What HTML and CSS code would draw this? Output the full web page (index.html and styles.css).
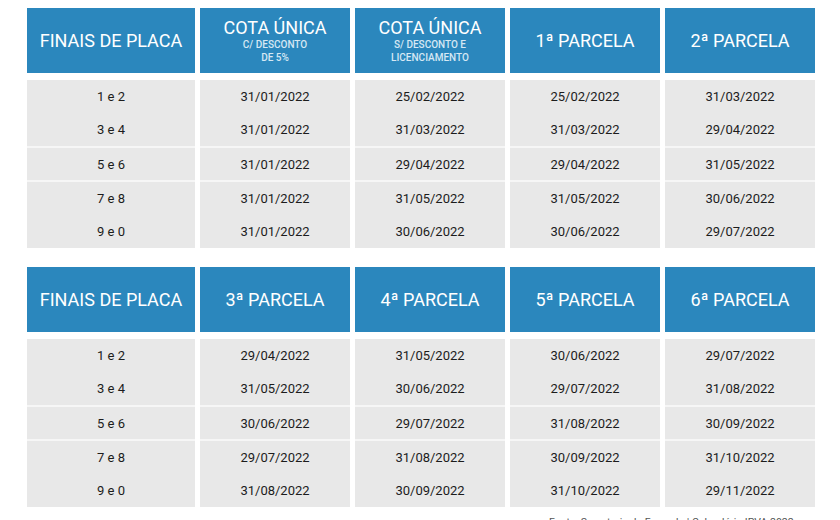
FILE: index.html
```html
<!DOCTYPE html>
<html lang="pt-BR">
<head>
<meta charset="utf-8">
<link rel="stylesheet" href="styles.css">
</head>
<body>
<div class="page">
  <div class="table">
    <div class="col first">
      <div class="head"><div class="title">FINAIS DE PLACA</div></div>
      <div class="body">
        <div class="cell">1 e 2</div><div class="cell">3 e 4</div><div class="cell mid">5 e 6</div><div class="cell">7 e 8</div><div class="cell">9 e 0</div>
      </div>
    </div>
    <div class="col">
      <div class="head"><div class="title">COTA ÚNICA</div><div class="sub">C/ DESCONTO<br>DE 5%</div></div>
      <div class="body">
        <div class="cell">31/01/2022</div><div class="cell">31/01/2022</div><div class="cell mid">31/01/2022</div><div class="cell">31/01/2022</div><div class="cell">31/01/2022</div>
      </div>
    </div>
    <div class="col">
      <div class="head"><div class="title">COTA ÚNICA</div><div class="sub">S/ DESCONTO E<br>LICENCIAMENTO</div></div>
      <div class="body">
        <div class="cell">25/02/2022</div><div class="cell">31/03/2022</div><div class="cell mid">29/04/2022</div><div class="cell">31/05/2022</div><div class="cell">30/06/2022</div>
      </div>
    </div>
    <div class="col">
      <div class="head"><div class="title">1ª PARCELA</div></div>
      <div class="body">
        <div class="cell">25/02/2022</div><div class="cell">31/03/2022</div><div class="cell mid">29/04/2022</div><div class="cell">31/05/2022</div><div class="cell">30/06/2022</div>
      </div>
    </div>
    <div class="col">
      <div class="head"><div class="title">2ª PARCELA</div></div>
      <div class="body">
        <div class="cell">31/03/2022</div><div class="cell">29/04/2022</div><div class="cell mid">31/05/2022</div><div class="cell">30/06/2022</div><div class="cell">29/07/2022</div>
      </div>
    </div>
  </div>

  <div class="table">
    <div class="col first">
      <div class="head"><div class="title">FINAIS DE PLACA</div></div>
      <div class="body">
        <div class="cell">1 e 2</div><div class="cell">3 e 4</div><div class="cell mid">5 e 6</div><div class="cell">7 e 8</div><div class="cell">9 e 0</div>
      </div>
    </div>
    <div class="col">
      <div class="head"><div class="title">3ª PARCELA</div></div>
      <div class="body">
        <div class="cell">29/04/2022</div><div class="cell">31/05/2022</div><div class="cell mid">30/06/2022</div><div class="cell">29/07/2022</div><div class="cell">31/08/2022</div>
      </div>
    </div>
    <div class="col">
      <div class="head"><div class="title">4ª PARCELA</div></div>
      <div class="body">
        <div class="cell">31/05/2022</div><div class="cell">30/06/2022</div><div class="cell mid">29/07/2022</div><div class="cell">31/08/2022</div><div class="cell">30/09/2022</div>
      </div>
    </div>
    <div class="col">
      <div class="head"><div class="title">5ª PARCELA</div></div>
      <div class="body">
        <div class="cell">30/06/2022</div><div class="cell">29/07/2022</div><div class="cell mid">31/08/2022</div><div class="cell">30/09/2022</div><div class="cell">31/10/2022</div>
      </div>
    </div>
    <div class="col">
      <div class="head"><div class="title">6ª PARCELA</div></div>
      <div class="body">
        <div class="cell">29/07/2022</div><div class="cell">31/08/2022</div><div class="cell mid">30/09/2022</div><div class="cell">31/10/2022</div><div class="cell">29/11/2022</div>
      </div>
    </div>
  </div>

  <p class="note">Fonte: Secretaria da Fazenda | Calendário IPVA 2022</p>
</div>
</body>
</html>
```

FILE: styles.css
```css
html, body {
  margin: 0;
  padding: 0;
  background: #ffffff;
}
body {
  font-family: Roboto, "Liberation Sans", Arial, sans-serif;
  overflow: hidden;
}
.page {
  display: flex;
  flex-direction: column;
  gap: 19px;
  padding: 8px 0 0 27px;
}
.table {
  display: flex;
  gap: 5px;
}
.col {
  width: 150px;
  display: flex;
  flex-direction: column;
  gap: 7px;
}
.col.first {
  width: 168px;
}
.head {
  height: 65px;
  background: #2b87bd;
  color: #ffffff;
  display: flex;
  flex-direction: column;
  align-items: center;
  justify-content: center;
  text-align: center;
}
.title {
  font-size: 18px;
  line-height: 21px;
}
.sub {
  font-size: 10px;
  line-height: 13px;
  font-weight: 500;
  color: #d6e8f4;
}
.body {
  background: #e8e8e8;
  display: flex;
  flex-direction: column;
}
.cell {
  height: 33px;
  display: flex;
  align-items: center;
  justify-content: center;
  font-size: 13px;
  color: #1c1c1c;
}
.cell.mid {
  height: 32px;
  border-top: 2px solid #f6f6f6;
  border-bottom: 2px solid #f6f6f6;
}
.note {
  margin: -10px 0 0 522px;
  font-size: 10.5px;
  color: #555555;
  white-space: nowrap;
}
```
